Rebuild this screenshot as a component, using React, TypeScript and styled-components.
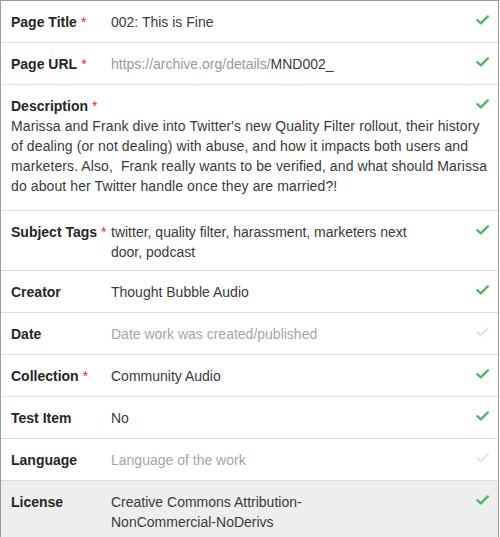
import React from "react";
import styled, { createGlobalStyle } from "styled-components";

const GlobalStyle = createGlobalStyle`
  html, body { margin: 0; padding: 0; background: #ffffff; }
  body {
    font-family: "Liberation Sans", Arial, Helvetica, sans-serif;
    font-size: 14px;
    color: #333333;
  }
`;

const Form = styled.div`
  width: 499px;
  box-sizing: border-box;
  border-top: 1px solid #9a9a9a;
  border-left: 1px solid #9a9a9a;
  border-right: 1px solid #9a9a9a;
  background: #ffffff;
`;

const Row = styled.div<{ $shaded?: boolean; $padBottom?: number }>`
  display: grid;
  grid-template-columns: 100px 1fr 13px;
  align-items: start;
  padding: 11px 9px ${(p) => p.$padBottom ?? 10}px 10px;
  border-bottom: 1px solid #dcdcdc;
  background: ${(p) => (p.$shaded ? "#eeeeee" : "#ffffff")};
  line-height: 20px;
`;

const Label = styled.div`
  grid-column: 1;
  grid-row: 1;
  font-weight: bold;
  color: #262626;
  white-space: nowrap;
`;

const Required = styled.span`
  color: #ec2a1f;
  margin-left: 4px;
  font-weight: normal;
`;

const Value = styled.div<{ $placeholder?: boolean; $width?: number }>`
  grid-column: 2;
  grid-row: 1;
  max-width: ${(p) => p.$width ?? 325}px;
  color: ${(p) => (p.$placeholder ? "#a6a6a6" : "#3a3a3a")};
`;

const Muted = styled.span`
  color: #9a9a9a;
`;

const Paragraph = styled.div`
  grid-column: 1 / -1;
  grid-row: 2;
  color: #3a3a3a;
  letter-spacing: 0.1px;
`;

const CheckCell = styled.div`
  grid-column: 3;
  grid-row: 1;
  padding-top: 3px;
  display: flex;
  justify-content: flex-end;
`;

const Check = ({ done = true }: { done?: boolean }) => (
  <svg width="13" height="10" viewBox="0 0 13 10">
    <path
      d="M1.3 5.2 L4.8 8.4 L11.8 1.4"
      fill="none"
      stroke={done ? "#52b76a" : "#e6e6e6"}
      strokeWidth="2.4"
      strokeLinecap="round"
      strokeLinejoin="round"
    />
  </svg>
);

type Field = {
  label: string;
  required?: boolean;
  value: React.ReactNode;
  placeholder?: boolean;
  done?: boolean;
  stacked?: boolean;
  shaded?: boolean;
  padBottom?: number;
  width?: number;
};

const fields: Field[] = [
  { label: "Page Title", required: true, value: "002: This is Fine" },
  {
    label: "Page URL",
    required: true,
    value: (
      <>
        <Muted>https://archive.org/details/</Muted>MND002_
      </>
    ),
  },
  {
    label: "Description",
    required: true,
    stacked: true,
    padBottom: 14,
    value:
      "Marissa and Frank dive into Twitter's new Quality Filter rollout, their history of dealing (or not dealing) with abuse, and how it impacts both users and marketers. Also,\u00a0 Frank really wants to be verified, and what should Marissa do about her Twitter handle once they are married?!",
  },
  {
    label: "Subject Tags",
    required: true,
    padBottom: 8,
    value: "twitter, quality filter, harassment, marketers next door, podcast",
  },
  { label: "Creator", value: "Thought Bubble Audio" },
  {
    label: "Date",
    value: "Date work was created/published",
    placeholder: true,
    done: false,
  },
  { label: "Collection", required: true, value: "Community Audio" },
  { label: "Test Item", value: "No" },
  {
    label: "Language",
    value: "Language of the work",
    placeholder: true,
    done: false,
  },
  {
    label: "License",
    shaded: true,
    width: 290,
    value: "Creative Commons Attribution-NonCommercial-NoDerivs",
  },
];

export default function App() {
  return (
    <>
      <GlobalStyle />
      <Form>
        {fields.map((f) => (
          <Row key={f.label} $shaded={f.shaded} $padBottom={f.padBottom}>
            <Label>
              {f.label}
              {f.required && <Required>*</Required>}
            </Label>
            {f.stacked ? (
              <Paragraph>{f.value}</Paragraph>
            ) : (
              <Value $placeholder={f.placeholder} $width={f.width}>
                {f.value}
              </Value>
            )}
            <CheckCell>
              <Check done={f.done !== false} />
            </CheckCell>
          </Row>
        ))}
      </Form>
    </>
  );
}
